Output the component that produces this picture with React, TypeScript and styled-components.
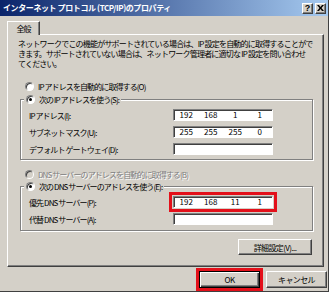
import styled, { createGlobalStyle, css } from "styled-components";

const face = `"Noto Sans CJK JP", "Liberation Sans", sans-serif`;

const GlobalStyle = createGlobalStyle`
  html, body {
    margin: 0;
    padding: 0;
    background: #d4d0c8;
  }
`;

const Window = styled.div`
  width: 329px;
  height: 292px;
  box-sizing: border-box;
  background: #d4d0c8;
  border-right: 1px solid #404040;
  border-bottom: 1px solid #404040;
  display: flex;
  flex-direction: column;
  font-family: ${face};
  font-size: 8px;
  letter-spacing: -0.9px;
  color: #000;
  overflow: hidden;
`;

const TitleBar = styled.div`
  height: 16px;
  flex: none;
  display: flex;
  align-items: center;
  padding: 0 2px 0 3px;
  background: linear-gradient(to right, #0a246a, #a6caf0);
  color: #fff;
  font-weight: bold;
`;

const Title = styled.span`
  flex: 1;
  white-space: nowrap;
  line-height: 16px;
  letter-spacing: -0.4px;
`;

const CaptionButtons = styled.div`
  display: flex;
  gap: 2px;
`;

const CaptionButton = styled.div`
  width: 11px;
  height: 11px;
  box-sizing: border-box;
  background: #d4d0c8;
  border: 1px solid;
  border-color: #fff #404040 #404040 #fff;
  box-shadow: inset -1px -1px 0 #808080;
  color: #000;
  font: bold 9px "Liberation Sans", sans-serif;
  letter-spacing: 0;
  line-height: 9px;
  display: flex;
  align-items: center;
  justify-content: center;
`;

const Body = styled.div`
  flex: 1;
  display: flex;
  flex-direction: column;
  padding: 5px 0 0 7px;
`;

const TabStrip = styled.div`
  display: flex;
  height: 13px;
`;

const Tab = styled.div`
  width: 33px;
  height: 14px;
  box-sizing: border-box;
  background: #d4d0c8;
  border-top: 1px solid #fff;
  border-left: 1px solid #fff;
  border-right: 1px solid #404040;
  box-shadow: inset -1px 0 0 #808080;
  position: relative;
  z-index: 1;
  display: flex;
  align-items: center;
  justify-content: center;
  line-height: 12px;
`;

const Panel = styled.div`
  width: 317px;
  height: 233px;
  box-sizing: border-box;
  border-top: 1px solid #fff;
  border-left: 1px solid #fff;
  border-right: 1px solid #404040;
  border-bottom: 1px solid #404040;
  box-shadow: inset -1px -1px 0 #808080;
  display: flex;
  flex-direction: column;
`;

const Description = styled.p`
  margin: 4px 0 0 10px;
  line-height: 10px;
  letter-spacing: -0.8px;
  white-space: nowrap;
`;

const RadioRow = styled.label<{ $disabled?: boolean; $indent?: number; $top?: number }>`
  display: flex;
  align-items: center;
  gap: 4px;
  height: 11px;
  line-height: 11px;
  white-space: nowrap;
  margin-left: ${(p) => p.$indent ?? 0}px;
  margin-top: ${(p) => p.$top ?? 0}px;
  color: ${(p) => (p.$disabled ? "#808080" : "#000")};
  text-shadow: ${(p) => (p.$disabled ? "1px 1px 0 #fff" : "none")};
`;

const RadioMark = styled.span<{ $checked?: boolean; $disabled?: boolean }>`
  width: 9px;
  height: 9px;
  box-sizing: border-box;
  border-radius: 50%;
  border: 1px solid;
  border-color: #808080 #fff #fff #808080;
  background: ${(p) => (p.$disabled ? "#d4d0c8" : "#fff")};
  box-shadow: inset 1px 1px 0 #404040;
  display: flex;
  align-items: center;
  justify-content: center;
  flex: none;

  &::after {
    content: "";
    width: 3px;
    height: 3px;
    border-radius: 50%;
    background: #000;
    display: ${(p) => (p.$checked ? "block" : "none")};
  }
`;

const Group = styled.fieldset<{ $top: number }>`
  margin: ${(p) => p.$top}px 10px 0 12px;
  padding: 0;
  min-width: 0;
  border: 1px solid #808080;
  box-shadow: inset 1px 1px 0 #fff, 1px 1px 0 #fff;
`;

const Legend = styled.legend`
  margin-left: 3px;
  padding: 0 2px;
  background: #d4d0c8;
`;

const Fields = styled.div<{ $pt: number; $pb: number }>`
  display: flex;
  flex-direction: column;
  gap: 5px;
  padding: ${(p) => p.$pt}px 0 ${(p) => p.$pb}px 8px;
`;

const FieldRow = styled.div`
  display: grid;
  grid-template-columns: 144px 100px;
  align-items: center;
  height: 12px;
  white-space: nowrap;
`;

const IpBox = styled.div<{ $marked?: boolean }>`
  width: 100px;
  height: 12px;
  box-sizing: border-box;
  background: #fff;
  border: 1px solid;
  border-color: #808080 #fff #fff #808080;
  box-shadow: inset 1px 1px 0 #404040;
  display: grid;
  grid-template-columns: repeat(4, 1fr);
  align-items: center;
  ${(p) =>
    p.$marked &&
    css`
      outline: 3px solid #e3101a;
      outline-offset: 1px;
    `}
`;

const Octet = styled.span`
  text-align: center;
  letter-spacing: 0;
  line-height: 10px;
`;

const Button = styled.button<{ $w: number; $h: number; $default?: boolean; $marked?: boolean }>`
  width: ${(p) => p.$w}px;
  height: ${(p) => p.$h}px;
  box-sizing: border-box;
  padding: 0;
  margin: 0;
  background: #d4d0c8;
  font-family: ${face};
  font-size: 8px;
  letter-spacing: -0.6px;
  color: #000;
  border: 1px solid;
  border-color: #fff #404040 #404040 #fff;
  box-shadow: inset -1px -1px 0 #808080;
  ${(p) =>
    p.$default &&
    css`
      border-color: #000;
      box-shadow: inset 1px 1px 0 #fff, inset -1px -1px 0 #404040, inset -2px -2px 0 #808080;
    `}
  ${(p) =>
    p.$marked &&
    css`
      outline: 3px solid #e3101a;
      outline-offset: 0;
    `}
`;

const PanelFooter = styled.div`
  display: flex;
  justify-content: flex-end;
  margin: 8px 11px 0 0;
`;

const DialogButtons = styled.div`
  display: flex;
  justify-content: flex-end;
  gap: 6px;
  margin-top: 4px;
  padding-right: 1px;
`;

function Radio({
  label,
  checked,
  disabled,
  indent,
  top,
}: {
  label: string;
  checked?: boolean;
  disabled?: boolean;
  indent?: number;
  top?: number;
}) {
  return (
    <RadioRow $disabled={disabled} $indent={indent} $top={top}>
      <RadioMark $checked={checked} $disabled={disabled} />
      {label}
    </RadioRow>
  );
}

function IpField({ value, marked }: { value?: string[]; marked?: boolean }) {
  return (
    <IpBox $marked={marked}>
      {(value ?? ["", "", "", ""]).map((v, i) => (
        <Octet key={i}>{v}</Octet>
      ))}
    </IpBox>
  );
}

function App() {
  return (
    <>
      <GlobalStyle />
      <Window>
        <TitleBar>
          <Title>インターネット プロトコル (TCP/IP)のプロパティ</Title>
          <CaptionButtons>
            <CaptionButton>?</CaptionButton>
            <CaptionButton>
              <svg width="7" height="6" viewBox="0 0 7 6">
                <path d="M0 0h2l1.5 2L5 0h2L4.5 3 7 6H5L3.5 4 2 6H0l2.5-3z" fill="#000" />
              </svg>
            </CaptionButton>
          </CaptionButtons>
        </TitleBar>
        <Body>
          <TabStrip>
            <Tab>全般</Tab>
          </TabStrip>
          <Panel>
            <Description>
              ネットワークでこの機能がサポートされている場合は、IP 設定を自動的に取得することがで
              <br />
              きます。サポートされていない場合は、ネットワーク管理者に適切な IP 設定を問い合わせ
              <br />
              てください。
            </Description>
            <Radio label="IP アドレスを自動的に取得する(O)" indent={17} top={12} />
            <Group $top={2}>
              <Legend>
                <Radio label="次の IP アドレスを使う(S):" checked />
              </Legend>
              <Fields $pt={4} $pb={4}>
                <FieldRow>
                  <span>IP アドレス(I):</span>
                  <IpField value={["192", "168", "1", "1"]} />
                </FieldRow>
                <FieldRow>
                  <span>サブネット マスク(U):</span>
                  <IpField value={["255", "255", "255", "0"]} />
                </FieldRow>
                <FieldRow>
                  <span>デフォルト ゲートウェイ(D):</span>
                  <IpField />
                </FieldRow>
              </Fields>
            </Group>
            <Radio label="DNS サーバーのアドレスを自動的に取得する(B)" disabled indent={17} top={9} />
            <Group $top={1}>
              <Legend>
                <Radio label="次の DNS サーバーのアドレスを使う(E):" checked />
              </Legend>
              <Fields $pt={4} $pb={5}>
                <FieldRow>
                  <span>優先 DNS サーバー(P):</span>
                  <IpField value={["192", "168", "11", "1"]} marked />
                </FieldRow>
                <FieldRow>
                  <span>代替 DNS サーバー(A):</span>
                  <IpField />
                </FieldRow>
              </Fields>
            </Group>
            <PanelFooter>
              <Button $w={74} $h={16}>詳細設定(V)...</Button>
            </PanelFooter>
          </Panel>
          <DialogButtons>
            <Button $w={61} $h={17} $default $marked>
              OK
            </Button>
            <Button $w={61} $h={17}>キャンセル</Button>
          </DialogButtons>
        </Body>
      </Window>
    </>
  );
}

export default App;
